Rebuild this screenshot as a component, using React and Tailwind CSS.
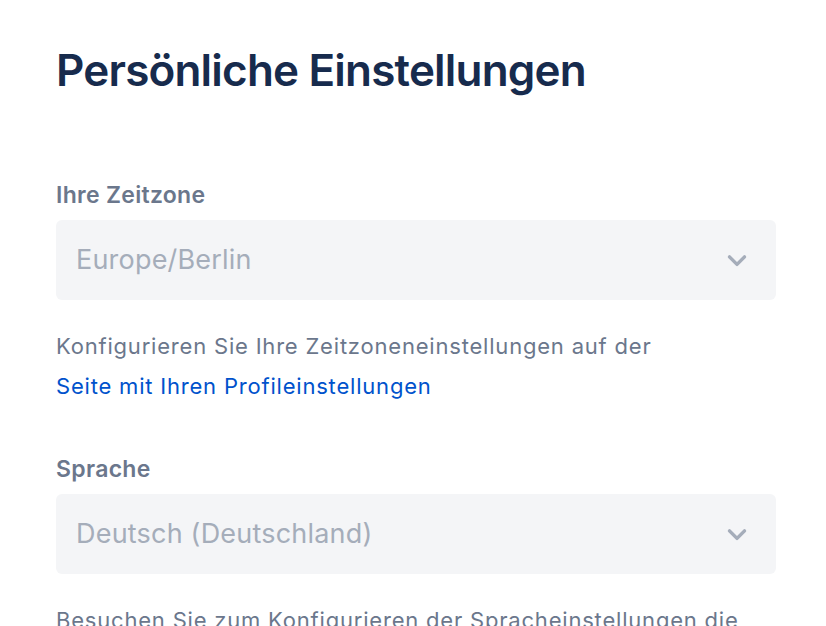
import React from 'react';

const Chevron = () => (
    <svg width="30" height="30" viewBox="0 0 24 24" fill="none" stroke="#A5ADBA" strokeWidth="2.8" strokeLinecap="round" strokeLinejoin="round">
        <path d="M6 9.5l6 6 6-6" />
    </svg>
);

const SelectBox = ({ value }) => (
    <div className="mt-[10px] h-[80px] w-[720px] rounded-[6px] bg-[#F4F5F7] flex items-center justify-between pl-[20px] pr-[24px]">
        <span className="text-[27px] text-[#A5ADBA] tracking-[0.2px]">{value}</span>
        <Chevron />
    </div>
);

export default function App() {
    return (
        <div className="w-[826px] h-[626px] overflow-hidden bg-white pl-[56px] pt-[40px]" style={{ fontFamily: 'Inter, "Noto Sans", sans-serif' }}>
            <h1 className="text-[44px] font-semibold text-[#172B4D] leading-[60px] tracking-[-0.8px]">Persönliche Einstellungen</h1>

            <div className="mt-[80px]">
                <p className="text-[23px] font-semibold text-[#6B778C] leading-[30px] tracking-[0.3px]">Ihre Zeitzone</p>
                <SelectBox value="Europe/Berlin" />
                <p className="mt-[26px] text-[22px] text-[#6B778C] leading-[40px] tracking-[0.8px]">
                    Konfigurieren Sie Ihre Zeitzoneneinstellungen auf der<br />
                    <span className="text-[#0052CC]">Seite mit Ihren Profileinstellungen</span>
                </p>
            </div>

            <div className="mt-[48px]">
                <p className="text-[23px] font-semibold text-[#6B778C] leading-[30px] tracking-[0.3px]">Sprache</p>
                <SelectBox value="Deutsch (Deutschland)" />
                <p className="mt-[26px] text-[22px] text-[#6B778C] leading-[40px] tracking-[0.8px] whitespace-nowrap">
                    Besuchen Sie zum Konfigurieren der Spracheinstellungen die
                </p>
            </div>
        </div>
    );
}
